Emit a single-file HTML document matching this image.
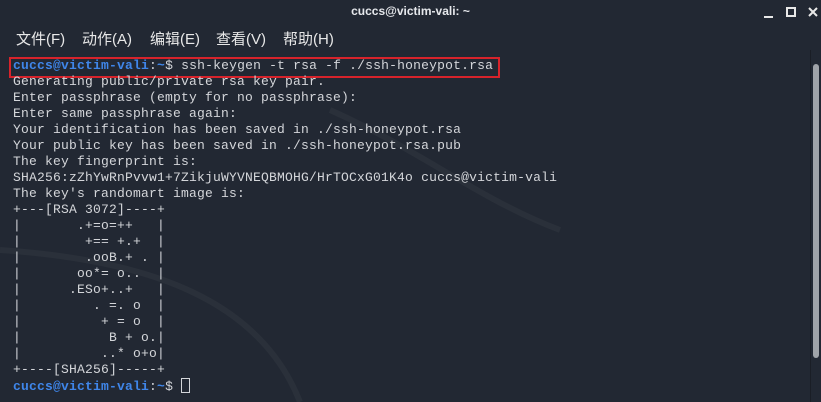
<!DOCTYPE html>
<html><head><meta charset="utf-8"><style>
html,body{margin:0;padding:0}
body{width:821px;height:402px;background:#222833;overflow:hidden;position:relative;font-family:"Liberation Sans","Noto Sans CJK SC",sans-serif}
.title{position:absolute;top:0;left:0;width:821px;height:22px;text-align:center;line-height:22px;color:#e6e8ec;font-size:12px;font-weight:bold}
.m{position:absolute;top:28px;color:#e8e8e8;font-size:15px;white-space:pre}
.term{position:absolute;left:13px;top:58px;margin:0;font-family:"Liberation Mono",monospace;font-size:13px;letter-spacing:0.2px;line-height:16px;color:#d4d6da;white-space:pre}
.p{color:#3f86ea;font-weight:bold}
.box{position:absolute;left:9px;top:57px;width:487px;height:17px;border:2px solid #d7232b}
.sb{position:absolute;left:813px;top:64px;width:6px;height:294px;background:#9fa3a8;border-radius:3px}
.div{position:absolute;left:810px;top:50px;width:1px;height:352px;background:#1a1e26}
.cur{display:inline-block;width:7px;height:13px;border:1px solid #d4d6da;vertical-align:-3px}
</style></head><body>
<div class="title">cuccs@victim-vali: ~</div>
<svg style="position:absolute;left:760px;top:5px" width="60" height="16">
<rect x="4" y="11" width="9" height="2" fill="#e8e8e8"/>
<rect x="27" y="3" width="8" height="8" fill="none" stroke="#e8e8e8" stroke-width="2"/>
<path d="M49 3l8 8M57 3l-8 8" stroke="#e8e8e8" stroke-width="2"/>
</svg>
<div class="m" style="left:16px">文件(F)</div>
<div class="m" style="left:82px">动作(A)</div>
<div class="m" style="left:150px">编辑(E)</div>
<div class="m" style="left:216px">查看(V)</div>
<div class="m" style="left:283px">帮助(H)</div>
<svg style="position:absolute;left:0;top:0" width="821" height="402"><path d="M330 110 C 420 150, 480 200, 560 230 M0 250 C150 260, 260 300, 300 402" stroke="#2a303a" stroke-width="6" fill="none"/></svg>
<div class="box"></div>
<div class="div"></div>
<div class="sb"></div>
<pre class="term"><span class="p">cuccs@victim-vali</span>:<span class="p">~</span>$ ssh-keygen -t rsa -f ./ssh-honeypot.rsa
Generating public/private rsa key pair.
Enter passphrase (empty for no passphrase):
Enter same passphrase again:
Your identification has been saved in ./ssh-honeypot.rsa
Your public key has been saved in ./ssh-honeypot.rsa.pub
The key fingerprint is:
SHA256:zZhYwRnPvvw1+7ZikjuWYVNEQBMOHG/HrTOCxG01K4o cuccs@victim-vali
The key's randomart image is:
+---[RSA 3072]----+
|       .+=o=++   |
|        +== +.+  |
|        .ooB.+ . |
|       oo*= o..  |
|      .ESo+..+   |
|         . =. o  |
|          + = o  |
|           B + o.|
|          ..* o+o|
+----[SHA256]-----+
<span class="p">cuccs@victim-vali</span>:<span class="p">~</span>$ <span class="cur"></span></pre>
</body></html>
